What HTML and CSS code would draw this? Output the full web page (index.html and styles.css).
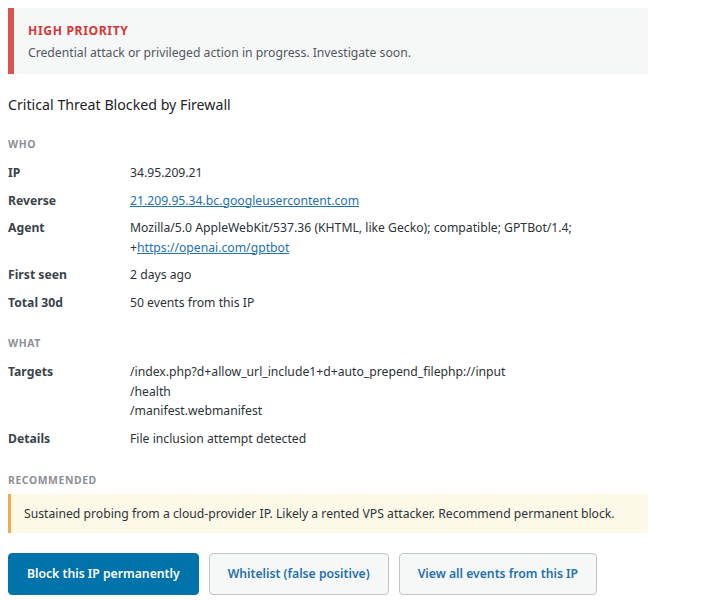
FILE: index.html
```html
<!DOCTYPE html>
<html>
    <head>
        <title>Threat details</title>
        <link rel="stylesheet" href="styles.css">
    </head>
    <body>
        <div class="notice notice-high">
            <div class="notice-title">HIGH PRIORITY</div>
            <div class="notice-text">Credential attack or privileged action in progress. Investigate soon.</div>
        </div>

        <h2 class="event-title">Critical Threat Blocked by Firewall</h2>

        <h3 class="section-label">Who</h3>
        <dl class="facts">
            <dt>IP</dt>
            <dd>34.95.209.21</dd>
            <dt>Reverse</dt>
            <dd><a href="#">21.209.95.34.bc.googleusercontent.com</a></dd>
            <dt>Agent</dt>
            <dd>Mozilla/5.0 AppleWebKit/537.36 (KHTML, like Gecko); compatible; GPTBot/1.4; +<a href="#">https://openai.com/gptbot</a></dd>
            <dt>First seen</dt>
            <dd>2 days ago</dd>
            <dt>Total 30d</dt>
            <dd>50 events from this IP</dd>
        </dl>

        <h3 class="section-label">What</h3>
        <dl class="facts facts-last">
            <dt>Targets</dt>
            <dd>
                /index.php?d+allow_url_include1+d+auto_prepend_filephp://input<br>
                /health<br>
                /manifest.webmanifest
            </dd>
            <dt>Details</dt>
            <dd>File inclusion attempt detected</dd>
        </dl>

        <h3 class="section-label tight">Recommended</h3>
        <div class="advice">Sustained probing from a cloud-provider IP. Likely a rented VPS attacker. Recommend permanent block.</div>

        <div class="actions">
            <button class="btn btn-primary">Block this IP permanently</button>
            <button class="btn">Whitelist (false positive)</button>
            <button class="btn">View all events from this IP</button>
        </div>
    </body>
</html>
```

FILE: styles.css
```css
* {
    margin: 0;
    padding: 0;
    box-sizing: border-box;
}

body {
    padding: 8px;
    width: 656px;
    font-family: "Noto Sans", "Open Sans", sans-serif;
    font-size: 12.2px;
    line-height: 19.5px;
    color: #2c3338;
    background: #fff;
}

a {
    color: #2271b1;
}

.notice {
    background: #f6f7f7;
    border-left: 6px solid #d9534f;
    padding: 13px 14px 12px;
}
.notice-title {
    color: #d63638;
    font-weight: 700;
    letter-spacing: 0.6px;
    margin-bottom: 2px;
}
.notice-text {
    color: #50575e;
}

.event-title {
    font-size: 14.2px;
    line-height: 24px;
    font-weight: 400;
    color: #1d2327;
    margin: 19px 0 19px;
}

.section-label {
    font-size: 10.4px;
    line-height: 16px;
    font-weight: 700;
    text-transform: uppercase;
    letter-spacing: 0.6px;
    color: #8c8f94;
    margin-bottom: 7px;
}
.section-label.tight {
    margin-bottom: 6px;
}

.facts {
    display: grid;
    grid-template-columns: 122px 1fr;
    margin-bottom: 19px;
}
.facts-last {
    margin-bottom: 20px;
}
.facts dt {
    font-weight: 700;
    color: #3c434a;
    padding: 4px 0;
}
.facts dd {
    padding: 4px 0;
}

.advice {
    background: #fcf9e8;
    border-left: 3px solid #f0ad4e;
    padding: 10px 13px 9px;
    color: #2c3338;
    margin-bottom: 20px;
}

.actions {
    display: flex;
    gap: 10px;
}
.btn {
    font-family: inherit;
    font-size: 12.2px;
    font-weight: 600;
    line-height: 20px;
    padding: 10px 18px;
    border: 1px solid #c3c4c7;
    border-radius: 4px;
    background: #f6f7f7;
    color: #2271b1;
    cursor: pointer;
}
.btn-primary {
    background: #0073aa;
    border-color: #0073aa;
    color: #fff;
}
```
